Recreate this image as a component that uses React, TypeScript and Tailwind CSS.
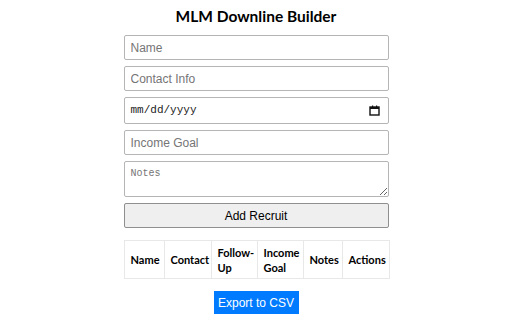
export default function App() {
  const inputCls =
    "h-[25px] rounded-[2px] border border-[#b5b5b5] px-[6px] font-['Liberation_Sans',sans-serif] text-[12px] placeholder:text-[#757575]";
  const thCls = "border border-[#e8e8e8] px-[6px] text-left leading-[15px]";
  return (
    <div className="min-h-screen bg-white font-['Lato',sans-serif] text-black">
      <div className="mx-auto w-[265px] pt-[5px]">
        <h1 className="mb-[8px] text-center text-[15.5px] leading-[22px] font-bold">MLM Downline Builder</h1>
        <div className="flex flex-col gap-[6px]">
          <input className={inputCls} placeholder="Name" />
          <input className={inputCls} placeholder="Contact Info" />
          <div className="flex h-[27px] items-center justify-between rounded-[2px] border border-[#b5b5b5] px-[6px]">
            <span className="font-['Liberation_Mono',monospace] text-[11px] text-[#222]">mm/dd/yyyy</span>
            <svg width="11" height="11" viewBox="0 0 11 11" className="mr-[2px]">
              <rect x="1" y="2" width="9" height="8" fill="none" stroke="#111" strokeWidth="1.4" />
              <rect x="1" y="2" width="9" height="2" fill="#111" />
              <rect x="3" y="0.5" width="1.2" height="2" fill="#111" />
              <rect x="7" y="0.5" width="1.2" height="2" fill="#111" />
            </svg>
          </div>
          <input className={inputCls} placeholder="Income Goal" />
          <textarea
            className="h-[36px] resize-y rounded-[2px] border border-[#b5b5b5] px-[6px] py-[4px] font-['Liberation_Mono',monospace] text-[10px] placeholder:text-[#757575]"
            placeholder="Notes"
          />
          <button className="h-[25px] rounded-[2px] border border-[#8f8f8f] bg-[#efefef] font-['Liberation_Sans',sans-serif] text-[12px]">
            Add Recruit
          </button>
        </div>
        <table className="mt-[12px] w-full table-fixed border-collapse text-[11px] font-bold">
          <thead>
            <tr className="h-[38px]">
              <th className={`${thCls} w-[40px]`}>Name</th>
              <th className={`${thCls} w-[47px]`}>Contact</th>
              <th className={`${thCls} w-[46px]`}>Follow-Up</th>
              <th className={`${thCls} w-[46px]`}>Income Goal</th>
              <th className={`${thCls} w-[39px]`}>Notes</th>
              <th className={`${thCls} w-[47px]`}>Actions</th>
            </tr>
          </thead>
        </table>
        <div className="mt-[12px] flex justify-center">
          <button className="h-[23px] w-[85px] bg-[#007bff] font-['Liberation_Sans',sans-serif] text-[12px] text-white">
            Export to CSV
          </button>
        </div>
      </div>
    </div>
  );
}
